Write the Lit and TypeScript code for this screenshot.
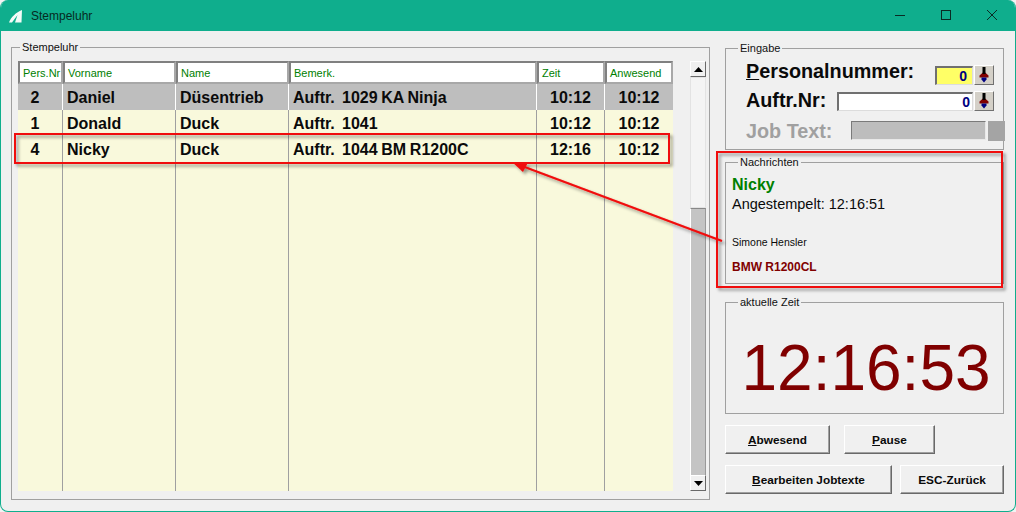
import { LitElement, html, css, svg } from "lit";
import { customElement } from "lit/decorators.js";

const COLS = ["Pers.Nr", "Vorname", "Name", "Bemerk.", "Zeit", "Anwesend"];
const ROWS = [
  { v: ["2", "Daniel", "Düsentrieb", "Auftr.  1029 KA Ninja", "10:12", "10:12"], sel: true },
  { v: ["1", "Donald", "Duck", "Auftr.  1041", "10:12", "10:12"], sel: false },
  { v: ["4", "Nicky", "Duck", "Auftr.  1044 BM R1200C", "12:16", "10:12"], sel: false },
];

const spinIcon = svg`<svg width="14" height="18" viewBox="0 0 14 18"><path d="M7 5.5L11.5 9.5V11.5H2.5V9.5Z" fill="#800000"/><path d="M4.5 11.5h5v2L7 16.5l-2.5-3z" fill="#000080"/><rect x="5.5" y="1" width="3" height="7" fill="#000"/></svg>`;

@customElement("app-root")
export class AppRoot extends LitElement {
  static styles = css`
    :host { display: block; width: 1016px; height: 512px; font-family: "Liberation Sans", Arial, sans-serif; background: #f3f3f3; overflow: hidden; }
    * { box-sizing: border-box; }
    .window { position: relative; width: 1016px; height: 512px; background: #f0f0f0; border: 1px solid #0fae8d; border-top: 0; border-radius: 8px; display: flex; flex-direction: column; overflow: hidden; }
    .titlebar { height: 31px; flex: none; background: #0fae8d; display: flex; align-items: center; padding-left: 8px; color: #062a22; font-size: 12px; }
    .titlebar .logo { width: 14px; height: 14px; margin-right: 8px; }
    .controls { margin-left: auto; align-self: flex-start; margin-top: 10px; display: flex; }
    .controls svg { display: block; width: 46px; height: 12px; }
    .main { flex: 1; display: flex; padding: 10px 11px 12px 10px; gap: 15px; min-height: 0; }
    fieldset { margin: 0; padding: 0; border: 1px solid #a0a0a0; min-width: 0; }
    legend { font-size: 11px; line-height: 13px; padding: 0 2px; color: #111; }
    .left { width: 699px; height: 459px; flex: none; padding: 7px 3px 7px 6px; display: flex; }
    .left legend { margin-left: 2px; }
    .left-inner { display: flex; gap: 17px; width: 100%; height: 430px; }
    .table { width: 655px; height: 100%; display: flex; flex-direction: column; }
    .row { display: grid; flex: none; }
    .head { height: 23px; grid-template-columns: 45px 113px 113px 248px 68px 68px; }
    .head div { background: #fff; border: 2px solid; border-color: #808080 #a8a8a8 #a8a8a8 #808080; color: #008000; font-size: 11px; line-height: 21px; padding-left: 3px; white-space: nowrap; overflow: hidden; }
    .cells { height: 26px; background: #f9f9dc; grid-template-columns: 44px 113px 113px 248px 68px 69px; }
    .cells.sel { background: #bebebe; }
    .cells div { border-left: 1px solid #a0a0a0; font-size: 16px; font-weight: bold; line-height: 24px; padding-top: 2px; color: #0a0a0a; padding-left: 4px; white-space: pre; word-spacing: -0.8px; }
    .cells.sel div { border-left-color: #fff; }
    .cells div.c { text-align: center; padding-left: 0; }
    .cells div:first-child { border-left: 0; padding-right: 10px; }
    .filler { flex: 1; height: auto; }
    .scroll { width: 17px; height: 100%; display: flex; flex-direction: column; }
    .sbtn { height: 16px; flex: none; background: #f0f0f0; border: 1px solid; border-color: #fff #696969 #696969 #fff; display: flex; align-items: center; justify-content: center; }
    .track { height: 131px; flex: none; background: #f4f4f4; border: 1px solid #e3e3e3; }
    .thumb { flex: 1; background: #c4c4c4; border-left: 1px solid #fff; border-top: 1px solid #888; border-right: 1px solid #999; }
    .side { width: 279px; flex: none; display: flex; flex-direction: column; padding-top: 1px; }
    .eingabe { height: 108px; padding: 10px 0 0 20px; display: flex; flex-direction: column; }
    .eingabe legend { margin-left: -8px; }
    .irow { display: flex; align-items: center; font-weight: bold; font-size: 19.8px; height: 20px; white-space: nowrap; color: #0a0a0a; }
    .irow.r1 { margin-bottom: 6px; }
    .irow.r1 > span { margin-bottom: 8px; }
    .irow.r2 { margin-bottom: 10px; }
    .irow.r2 > span { margin-bottom: 2px; }
    .u { text-decoration: underline; }
    .push { margin-left: auto; }
    .inp { height: 19px; flex: none; background: #fff; border: 1px solid; border-color: #707070 #dcdcdc #dcdcdc #707070; border-width: 2px 1px 1px 2px; color: #000080; font-size: 14px; line-height: 16px; text-align: right; font-weight: bold; }
    .inp.yel { width: 38px; background: #ffff66; padding-right: 5px; }
    .inp.wide { width: 136px; padding-right: 2px; }
    .spin { width: 20px; height: 20px; flex: none; margin: 0 9px 0 1px; background: #d4d0c8; border: 1px solid; border-color: #fff #707070 #707070 #fff; display: flex; align-items: center; justify-content: center; }
    .irow.job { color: #a0a0a0; margin-right: -2px; }
    .jbar { width: 135px; height: 19px; flex: none; align-self: flex-start; background: #bdbdbd; border: 1px solid; border-color: #7a7a7a #e8e8e8 #e8e8e8 #7a7a7a; }
    .jknob { width: 17px; height: 20px; flex: none; margin-left: 2px; background: #a4a4a4; }
    .nach { height: 128px; margin-top: 6px; padding: 6px 0 0 6px; display: flex; flex-direction: column; }
    .nach legend { margin-left: 6px; }
    .n1 { font-size: 16px; font-weight: bold; color: #008000; line-height: 20px; }
    .n2 { font-size: 14.5px; line-height: 19px; color: #0a0a0a; }
    .n3 { font-size: 10.5px; line-height: 14px; margin-top: 21px; color: #0a0a0a; }
    .n4 { font-size: 12px; font-weight: bold; line-height: 14px; margin-top: 11px; color: #800000; }
    .zeit { height: 118px; margin-top: 12px; display: flex; align-items: center; justify-content: center; }
    .zeit legend { margin-left: 12px; }
    .clock { font-size: 64px; line-height: 74px; color: #800000; margin-top: 22px; margin-left: 3px; }
    .btns { display: flex; flex-direction: column; gap: 11px; margin-top: 11px; }
    .brow { display: flex; height: 29px; }
    button { font: bold 11.8px "Liberation Sans", Arial, sans-serif; height: 29px; padding: 0; background: #f0f0f0; color: #0a0a0a; border: 1px solid; border-color: #fff #696969 #696969 #fff; box-shadow: inset -1px -1px 0 #a0a0a0; }
    .b1 { width: 105px; }
    .b2 { width: 91px; margin-left: 14px; }
    .b3 { width: 167px; }
    .b4 { width: 104px; margin-left: 8px; }
    .overlay { position: absolute; left: -1px; top: 0; width: 1016px; height: 512px; pointer-events: none; }
  `;

  render() {
    return html`<div class="window">
      <div class="titlebar">
        <svg class="logo" viewBox="0 0 14 14"><path d="M0 13.5C2 8 7 3.5 13 1L12.5 13.5H6L8.5 6L3 13.5Z" fill="#f3fbf8"/></svg>
        <span>Stempeluhr</span>
        <div class="controls">
          <svg viewBox="0 0 46 12"><rect x="18" y="5" width="10" height="1" fill="#0a2b24"/></svg>
          <svg viewBox="0 0 46 12"><rect x="18.5" y="0.5" width="9" height="9" fill="none" stroke="#0a2b24"/></svg>
          <svg viewBox="0 0 46 12"><path d="M18 0l10 10M28 0L18 10" stroke="#0a2b24" fill="none"/></svg>
        </div>
      </div>
      <div class="main">
        <fieldset class="left">
          <legend>Stempeluhr</legend>
          <div class="left-inner">
            <div class="table">
              <div class="row head">${COLS.map((c) => html`<div>${c}</div>`)}</div>
              ${ROWS.map((r) => html`<div class="row cells ${r.sel ? "sel" : ""}">
                ${r.v.map((t, i) => html`<div class="${i === 0 || i > 3 ? "c" : ""}">${t}</div>`)}
              </div>`)}
              <div class="row cells filler">${COLS.map(() => html`<div></div>`)}</div>
            </div>
            <div class="scroll">
              <div class="sbtn"><svg width="9" height="5" viewBox="0 0 9 5"><path d="M4.5 0L9 5H0z"/></svg></div>
              <div class="track"></div>
              <div class="thumb"></div>
              <div class="sbtn"><svg width="9" height="5" viewBox="0 0 9 5"><path d="M0 0h9L4.5 5z"/></svg></div>
            </div>
          </div>
        </fieldset>
        <div class="side">
          <fieldset class="eingabe">
            <legend>Eingabe</legend>
            <div class="irow r1"><span><span class="u">P</span>ersonalnummer:</span><div class="inp yel push">0</div><div class="spin">${spinIcon}</div></div>
            <div class="irow r2"><span>Auftr.Nr:</span><div class="inp wide push">0</div><div class="spin">${spinIcon}</div></div>
            <div class="irow job"><span>Job Text:</span><div class="jbar push"></div><div class="jknob"></div></div>
          </fieldset>
          <fieldset class="nach">
            <legend>Nachrichten</legend>
            <div class="n1">Nicky</div>
            <div class="n2">Angestempelt: 12:16:51</div>
            <div class="n3">Simone Hensler</div>
            <div class="n4">BMW R1200CL</div>
          </fieldset>
          <fieldset class="zeit">
            <legend>aktuelle Zeit</legend>
            <div class="clock">12:16:53</div>
          </fieldset>
          <div class="btns">
            <div class="brow"><button class="b1"><span class="u">A</span>bwesend</button><button class="b2"><span class="u">P</span>ause</button></div>
            <div class="brow"><button class="b3"><span class="u">B</span>earbeiten Jobtexte</button><button class="b4">ESC-Zurück</button></div>
          </div>
        </div>
      </div>
      <svg class="overlay" viewBox="0 0 1016 512">
        <defs><filter id="s" x="-5%" y="-20%" width="110%" height="140%"><feDropShadow dx="2.5" dy="2.5" stdDeviation="1.5" flood-color="#000" flood-opacity="0.4"/></filter></defs>
        <g filter="url(#s)" fill="none" stroke="#f00a0a" stroke-width="2">
          <rect x="15" y="134" width="654" height="29"/>
          <rect x="717" y="152" width="285" height="135"/>
          <path d="M722 241L522 166"/>
          <path d="M512 162L528 162.500L523 172Z" fill="#f00a0a" stroke="none"/>
        </g>
      </svg>
    </div>`;
  }
}
